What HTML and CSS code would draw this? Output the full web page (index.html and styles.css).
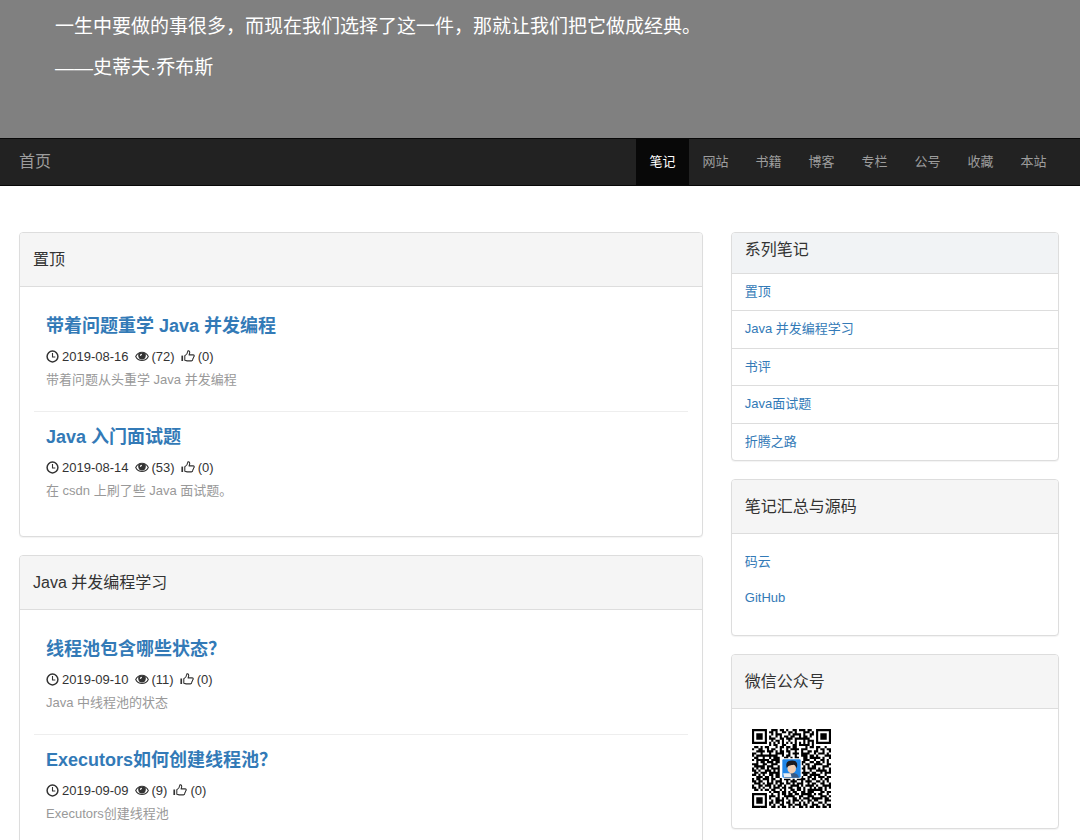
FILE: index.html
```html
<!DOCTYPE html>
<html lang="zh-CN">
<head>
<meta charset="utf-8">
<meta name="viewport" content="width=device-width, initial-scale=1">
<title>笔记</title>
<link rel="stylesheet" href="styles.css">
</head>
<body>
<svg class="symbols" aria-hidden="true">
  <symbol id="clock" viewBox="0 0 13 13">
    <circle cx="6.500" cy="6.500" r="5.400" fill="none" stroke="currentColor" stroke-width="1.500"/>
    <path d="M6.500 3v4h2.800" fill="none" stroke="currentColor" stroke-width="1.100"/>
  </symbol>
  <symbol id="eye" viewBox="0 0 14 13">
    <path d="M.7 6.500C3.400 .9 10.600 .9 13.300 6.500 10.600 11.900 3.400 11.900 .7 6.500z" fill="none" stroke="currentColor" stroke-width="1.100"/>
    <path d="M3.400 3.400C5.500 2.200 8.500 2.200 10.600 3.400 11.500 7 9.500 9.600 7 9.600S2.500 7 3.400 3.400z" fill="currentColor"/>
    <path d="M4.800 5.500C5 4.500 5.600 3.900 6.700 3.700L7 4.900C6.300 5 6 5.400 5.900 6z" fill="#fff"/>
  </symbol>
  <symbol id="thumb" viewBox="0 0 14 13">
    <path d="M.4 5.600h1.700v5.400H.4z" fill="currentColor"/>
    <path d="M3.800 5.700C6 4.600 6.600 3 6.800 1.200 7 .5 8.600.7 8.700 2.200 8.700 3.200 8.400 4.100 8.100 4.900h4.200c1.300.1 1.200 1.700.3 2C12.600 8.400 12 8.600 11.900 8.700 11.800 10.200 11.200 10.800 10.400 10.900H6.200L3.800 10.200z" fill="none" stroke="currentColor" stroke-width="1.100" stroke-linejoin="round"/>
  </symbol>
</svg>

<header class="hero">
  <p>一生中要做的事很多，而现在我们选择了这一件，那就让我们把它做成经典。</p>
  <p>——史蒂夫·乔布斯</p>
</header>

<nav class="navbar">
  <a class="brand" href="#">首页</a>
  <ul class="menu">
    <li><a class="active" href="#">笔记</a></li>
    <li><a href="#">网站</a></li>
    <li><a href="#">书籍</a></li>
    <li><a href="#">博客</a></li>
    <li><a href="#">专栏</a></li>
    <li><a href="#">公号</a></li>
    <li><a href="#">收藏</a></li>
    <li><a href="#">本站</a></li>
  </ul>
</nav>

<div class="layout">
  <main class="main">
    <section class="panel">
      <h2 class="panel-heading">置顶</h2>
      <div class="articles">
        <article class="article">
          <h3><a href="#">带着问题重学 Java 并发编程</a></h3>
          <div class="meta"><svg class="icon"><use href="#clock"/></svg><time>2019-08-16</time><svg class="icon wide"><use href="#eye"/></svg><span>(72)</span><svg class="icon wide"><use href="#thumb"/></svg><span>(0)</span></div>
          <p>带着问题从头重学 Java 并发编程</p>
        </article>
        <article class="article">
          <h3><a href="#">Java 入门面试题</a></h3>
          <div class="meta"><svg class="icon"><use href="#clock"/></svg><time>2019-08-14</time><svg class="icon wide"><use href="#eye"/></svg><span>(53)</span><svg class="icon wide"><use href="#thumb"/></svg><span>(0)</span></div>
          <p>在 csdn 上刷了些 Java 面试题。</p>
        </article>
      </div>
    </section>
    <section class="panel">
      <h2 class="panel-heading">Java 并发编程学习</h2>
      <div class="articles">
        <article class="article">
          <h3><a href="#">线程池包含哪些状态？</a></h3>
          <div class="meta"><svg class="icon"><use href="#clock"/></svg><time>2019-09-10</time><svg class="icon wide"><use href="#eye"/></svg><span>(11)</span><svg class="icon wide"><use href="#thumb"/></svg><span>(0)</span></div>
          <p>Java 中线程池的状态</p>
        </article>
        <article class="article">
          <h3><a href="#">Executors如何创建线程池？</a></h3>
          <div class="meta"><svg class="icon"><use href="#clock"/></svg><time>2019-09-09</time><svg class="icon wide"><use href="#eye"/></svg><span>(9)</span><svg class="icon wide"><use href="#thumb"/></svg><span>(0)</span></div>
          <p>Executors创建线程池</p>
        </article>
      </div>
    </section>
  </main>

  <aside class="side">
    <section class="panel">
      <h2 class="panel-heading compact">系列笔记</h2>
      <ul class="series">
        <li><a href="#">置顶</a></li>
        <li><a href="#">Java 并发编程学习</a></li>
        <li><a href="#">书评</a></li>
        <li><a href="#">Java面试题</a></li>
        <li><a href="#">折腾之路</a></li>
      </ul>
    </section>
    <section class="panel">
      <h2 class="panel-heading">笔记汇总与源码</h2>
      <div class="sources">
        <a href="#">码云</a>
        <a href="#">GitHub</a>
      </div>
    </section>
    <section class="panel">
      <h2 class="panel-heading">微信公众号</h2>
      <div class="qr-box">
        <svg class="qr" viewBox="0 0 37 37" role="img" aria-label="微信公众号二维码">
          <path id="modules" fill="#000"/>
          <rect x="13.700" y="13.700" width="9.600" height="9.600" rx=".8" fill="#fff"/>
          <rect x="14.200" y="14.200" width="8.600" height="8.600" rx=".5" fill="#1f86e8"/>
          <path d="M15.200 22.800c.2-1.600 1.500-2.300 3.300-2.300s3.200.7 3.500 2.300z" fill="#365a86"/>
          <ellipse cx="18.600" cy="18.500" rx="2" ry="2.300" fill="#f1cdb0"/>
          <path d="M16.300 18.300c-.8-2.500.4-3.500 2.500-3.500 2 0 2.900 1.200 2.100 3.600-.4-1.200-1-1.700-1.500-1.700-1 .3-2.200.1-3.100 1.600z" fill="#1b1b20"/>
          <path d="M14.600 20.700h3.500l.4 1.900h-3.500z" fill="#e8edf2"/>
        </svg>
      </div>
    </section>
  </aside>
</div>
<script src="qr.js"></script>
</body>
</html>
```
FILE: styles.css
```css
* { box-sizing: border-box; }

body {
  margin: 0;
  background: #fff;
  color: #333;
  font: 13px/18px "Liberation Sans", "Noto Sans CJK SC", sans-serif;
}

h2, h3, p, ul { margin: 0; padding: 0; }
ul { list-style: none; }
a { color: #337ab7; text-decoration: none; }
.symbols { display: none; }

.hero {
  display: flex;
  flex-direction: column;
  gap: 13px;
  padding: 13px 55px 56px;
  background: #808080;
  color: #fff;
  font-size: 19px;
  line-height: 28px;
}

.navbar {
  display: flex;
  justify-content: space-between;
  padding: 0 20px 0 19px;
  border: solid #080808;
  border-width: 1px 0;
  background: #222;
}
.navbar a { display: block; color: #9d9d9d; line-height: 46px; }
.navbar .brand { font-size: 16px; }
.menu { display: flex; }
.menu a { min-width: 53px; text-align: center; }
.navbar .menu .active { background: #080808; color: #fff; }

.layout {
  display: grid;
  grid-template-columns: 25fr 12fr;
  align-items: start;
  gap: 28px;
  padding: 46px 21px 18px 19px;
}
.main, .side { display: grid; gap: 18px; }

.panel {
  border: 1px solid #ddd;
  border-radius: 4px;
  background: #fff;
  box-shadow: 0 1px 1px rgba(0, 0, 0, .05);
  overflow: hidden;
}
.panel-heading {
  padding: 15px 13px 14px;
  border-bottom: 1px solid #ddd;
  background: #f5f5f5;
  font-size: 16px;
  font-weight: 400;
  line-height: 24px;
}
.panel-heading.compact { padding: 5px 13px 11px; border-bottom: 0; background: #f1f3f5; }

.articles { padding: 14px; }
.article { padding: 13px 12px 20px; border-bottom: 1px solid #eee; }
.article:last-child { border-bottom: 0; }
.article h3 { margin-bottom: 7px; font-size: 18px; line-height: 24px; }
.article p { color: #999; line-height: 22px; }
.meta { display: flex; align-items: center; gap: 3px; line-height: 24px; }
.icon { width: 13px; height: 13px; margin-bottom: 2px; }
.icon.wide { width: 14px; margin-left: 3px; }

.series { display: grid; grid-auto-rows: 1fr; min-height: 187px; }
.series li { padding: 9px 13px; border-top: 1px solid #ddd; }
.series a { display: block; }

.sources { display: grid; gap: 18px; padding: 19px 13px 28px; }

.qr-box { padding: 20px; }
.qr { display: block; width: 79px; height: 79px; }
```
FILE: qr.js
```js
// One string per row of the code; "#" is a dark module.
const rows = [
  "#######..###.##.#..##.###.##..#######",
  "#.....#.##.#..##.##.#...###.#.#.....#",
  "#.###.#..#.###...#.####.#..##.#.###.#",
  "#.###.#.#..#.#.##.##..#.##.#..#.###.#",
  "#.###.#.###..##.###.#######...#.###.#",
  "#.....#..#.##.#..#..#...#.###.#.....#",
  "#######.#.#.#.#.#.#.#.#.#.#.#.#######",
  "........#.##..##...##.#####.#........",
  ".##.#.##...#.##.##.##....#.##.##..#..",
  "#..##..#.##..#..#.####.###....#.##.##",
  "..####.###.#.##.##..#..#..##.##..#..#",
  "##..#...#..####..#.###.####..#.###.#.",
  "#.##########..#.##..#..###.##.#...###",
  ".##..#..#.###..##.#.##..##.#####.#..#",
  "#.######.####...........###..#..##.#.",
  "..#.##.###.##..........##..##.##.#.#.",
  "###..##..###...........#.##..####..##",
  ".#####.###..#...........#.#.##...###.",
  "#.#.##.#.####..........##.####.#.#..#",
  "##.#..###.#.#...........#..#..#####.#",
  ".##.###.#####..........####.##..#.###",
  "##.#.#..##.##...........##.#####..#..",
  "..###.##.#.##..........#..##.#.###.##",
  "#.##.###.##..#.###.#.####.#.##..#.##.",
  "##.##..#.#.###..#.###..#.###..##.#.#.",
  ".###.#.###.#.##.##.#.###..#.##..##..#",
  "#..##.###.#.##.#..####.#.####.#..####",
  "##.#.#..#.###.##.##..##.#..#.#.##.#.#",
  ".##.#.##.##..#.#..##.##.#.#######.#..",
  "........#.###.##.#.##..##.###...##.##",
  "#######..#..#.##.##.##.#####.#.##..#.",
  "#.....#.###.#..#####..##..###...###.#",
  "#.###.#.#..##.#.#..##.#.###.#####.##.",
  "#.###.#..#.####..#.###.#..##.##...###",
  "#.###.#.##.##.#.##.#..#.#.#.#..##.#..",
  "#.....#.#.#..##..##.###.##..###..#.##",
  "#######..##.#.##.#.#..##.#.##.##.##.#"
];

const path = rows.flatMap((row, y) =>
  [...row].map((cell, x) => (cell === "#" ? `M${x} ${y}h1v1h-1z` : ""))
).join("");
document.getElementById("modules").setAttribute("d", path);
```
